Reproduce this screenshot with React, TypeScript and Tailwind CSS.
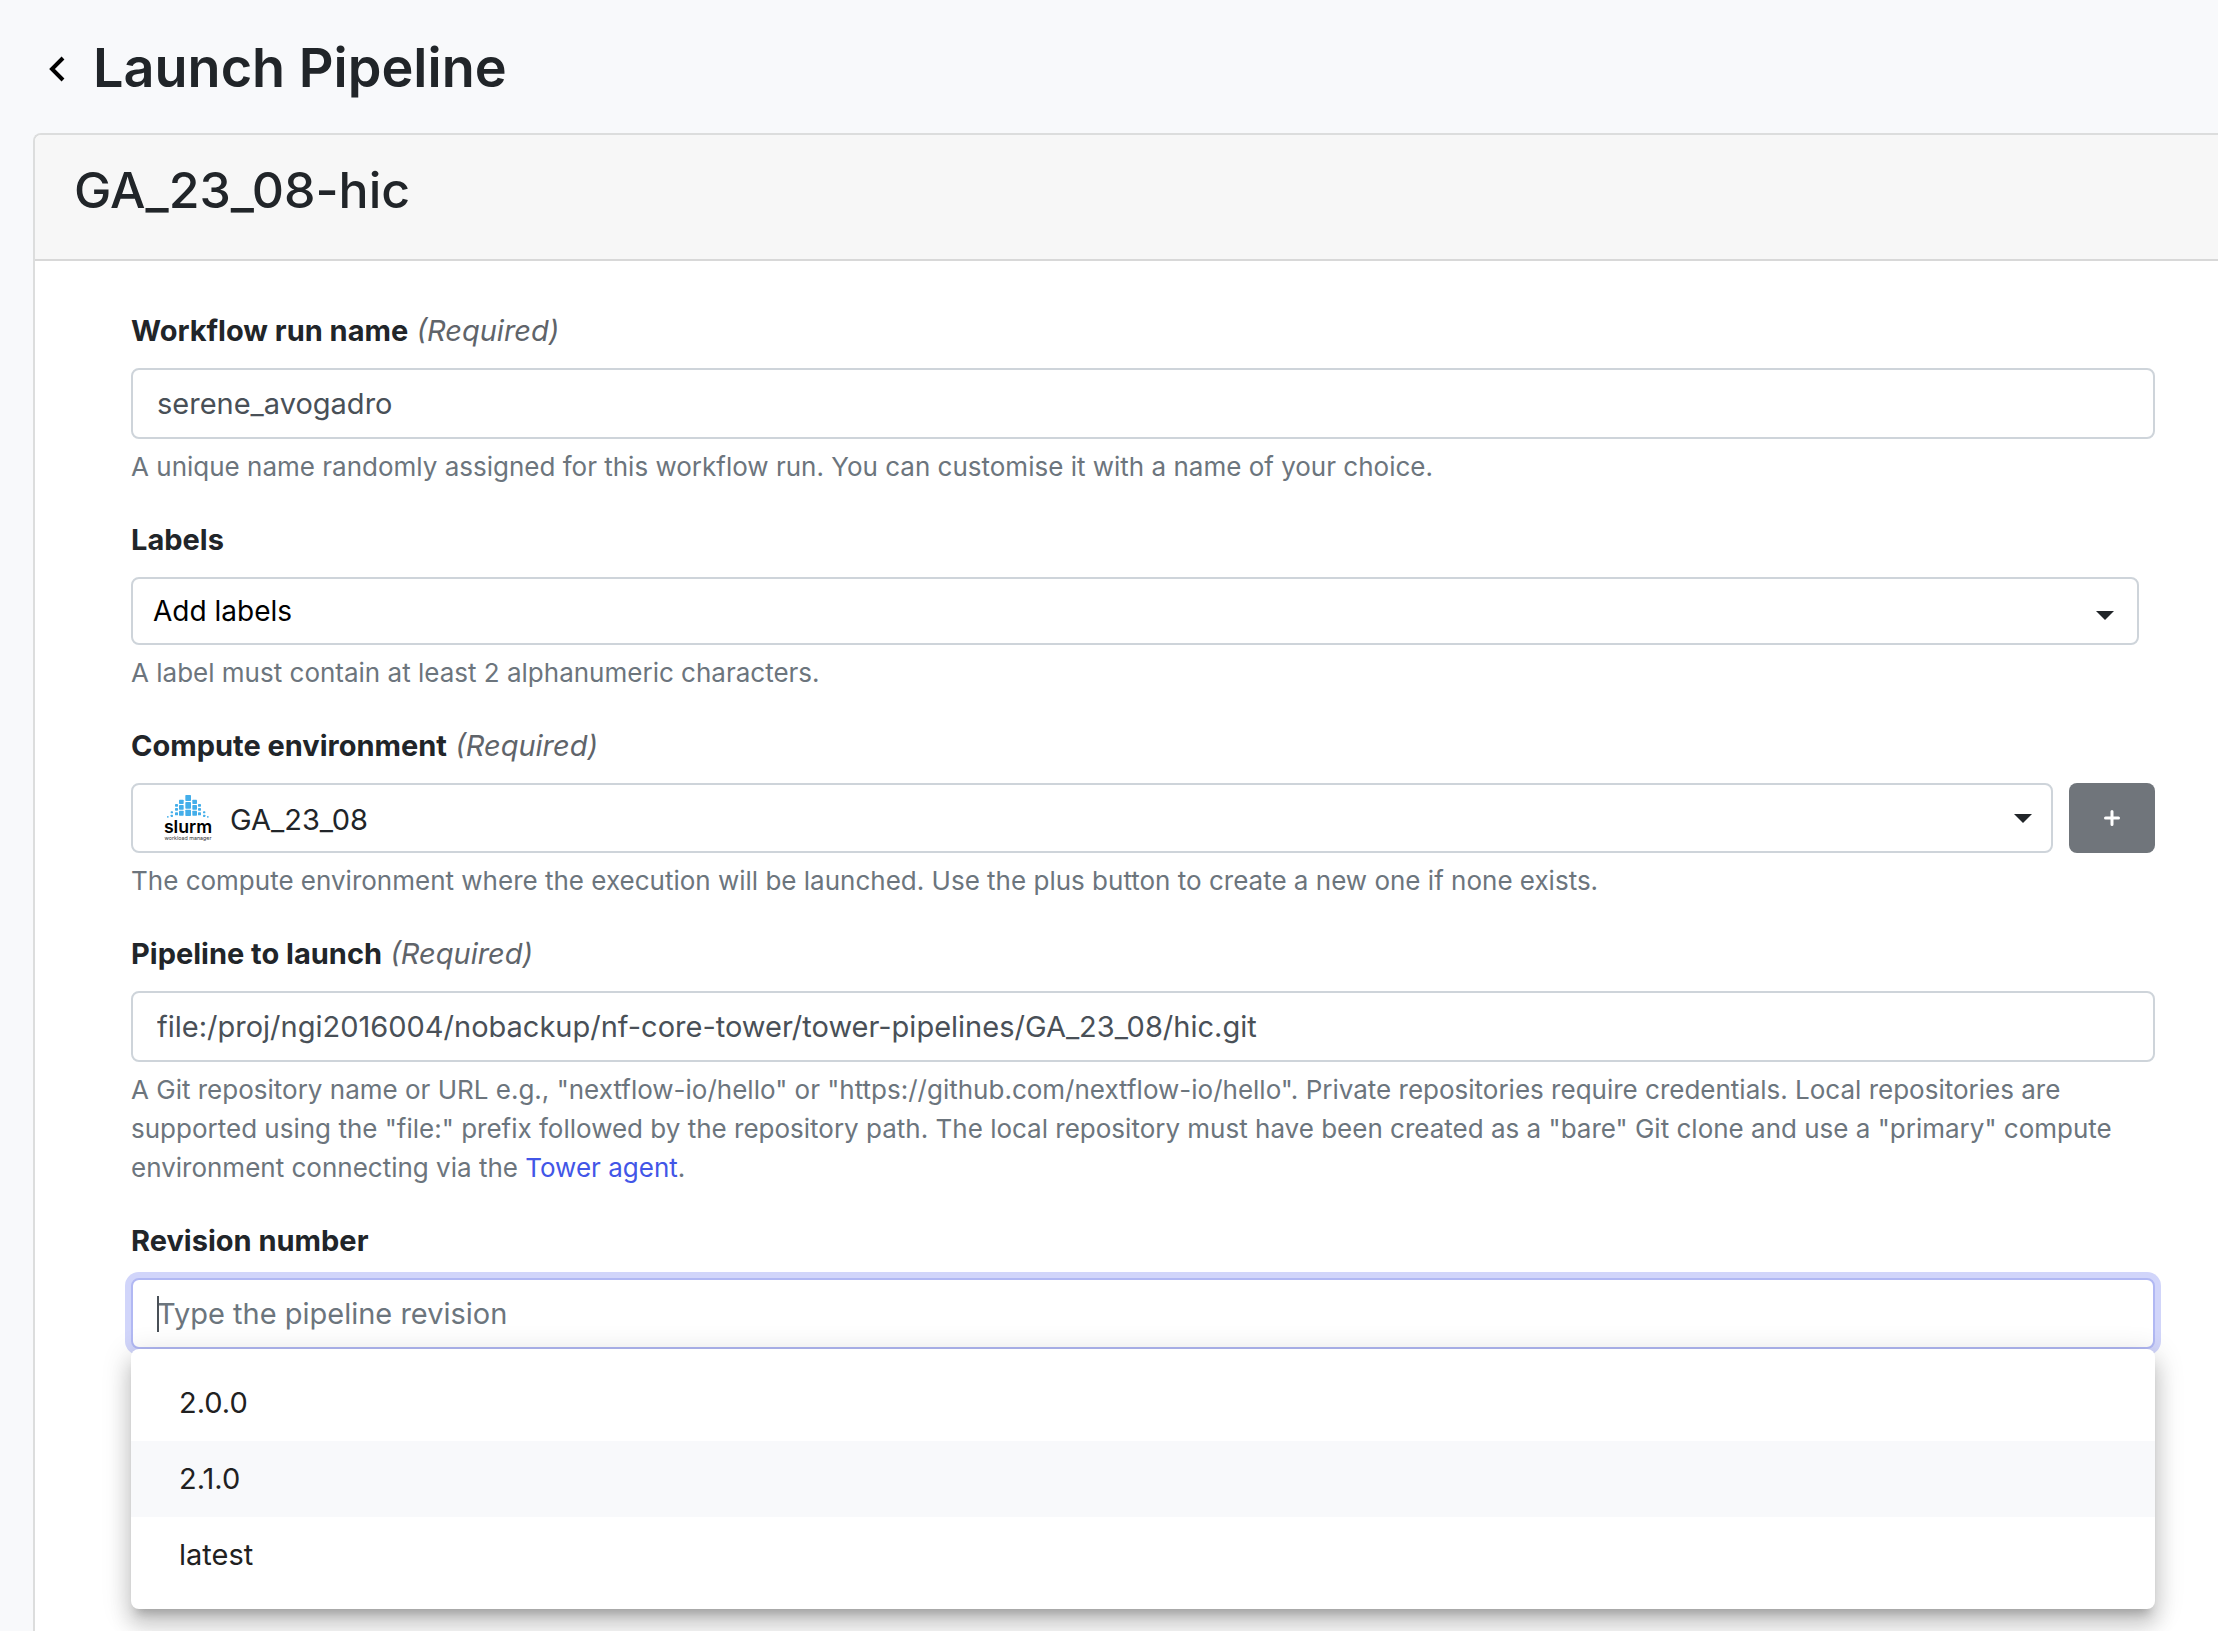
import { useState } from 'react';
import type { ReactNode } from 'react';

interface FieldProps {
  id: string;
  label: string;
  required?: boolean;
  help?: ReactNode;
  children: ReactNode;
}

const Field = ({ id, label, required, help, children }: FieldProps) => (
  <div>
    <label htmlFor={id} className="block mb-4 text-[29px] leading-[42px] font-bold">
      {label}
      {required && <span className="font-normal italic text-[#5f646a]"> (Required)</span>}
    </label>
    {children}
    {help && <p className="mt-2 text-[26px] leading-[39px] text-[#6c757d]">{help}</p>}
  </div>
);

const Caret = () => (
  <svg width="18" height="9" viewBox="0 0 18 9" fill="#212529" aria-hidden="true">
    <path d="M0 0h18L9 9z" />
  </svg>
);

// x, y, width, height of each block in the slurm mark
const slurmBlocks = [
  [106, 45, 17, 18], [106, 66, 17, 20], [106, 89, 17, 19],
  [87, 59, 14, 13], [87, 75, 14, 14], [87, 92, 14, 15],
  [127, 59, 14, 13], [127, 75, 14, 14], [127, 92, 14, 15],
  [75, 72, 9, 8], [75, 84, 9, 8], [75, 97, 9, 9],
  [144, 72, 9, 8], [144, 84, 9, 8], [144, 97, 9, 9],
  [62, 94, 7, 6], [62, 104, 7, 7], [159, 94, 7, 6], [159, 104, 7, 7],
  [51, 108, 5, 5], [171, 108, 5, 5],
];

const SlurmLogo = () => (
  <svg width="48" height="48" viewBox="42 42 144 144" aria-hidden="true">
    {slurmBlocks.map(([x, y, w, h]) => (
      <rect key={`${x}-${y}`} x={x} y={y} width={w} height={h} rx="2" fill="#43aeea" />
    ))}
    <text x="114" y="159" textAnchor="middle" fontSize="53" fontWeight="600" fill="#000">slurm</text>
    <text x="114" y="179" textAnchor="middle" fontSize="16" fill="#333">workload manager</text>
  </svg>
);

const inputClass =
  'block w-full h-[71px] px-6 text-[29px] bg-white border-2 border-[#ced4da] rounded-lg outline-none text-[#495057] placeholder:text-[#6c757d] placeholder:opacity-100';

const revisions = ['2.0.0', '2.1.0', 'latest'];

export default function App() {
  const [runName, setRunName] = useState('serene_avogadro');
  const [pipeline, setPipeline] = useState(
    'file:/proj/ngi2016004/nobackup/nf-core-tower/tower-pipelines/GA_23_08/hic.git'
  );
  const [revision, setRevision] = useState('');
  const [active, setActive] = useState('2.1.0');

  return (
    <div className="min-h-screen flex flex-col pl-[33px] bg-[#f8f9fb] text-[#212529] font-['Inter',sans-serif] overflow-hidden">
      <header className="flex items-center pt-[34px] pb-[31px] pl-3">
        <button type="button" aria-label="Back" className="mr-6">
          <svg width="24" height="28" viewBox="0 0 24 28" fill="none" stroke="#000" strokeWidth="4">
            <path d="M18 4L7 15L18 26" />
          </svg>
        </button>
        <h1 className="text-[54px] leading-[68px] font-semibold">Launch Pipeline</h1>
      </header>

      <main className="flex-1 bg-white border-t-2 border-l-2 border-[#dcdddd] rounded-tl-lg">
        <div className="pt-[25px] pb-[39px] pl-[39px] bg-[#f7f7f7] border-b-2 border-[#d8d8d8] rounded-tl-md">
          <h2 className="text-[50px] leading-[60px] font-medium">GA_23_08-hic</h2>
        </div>

        <form className="flex flex-col gap-[33px] pt-[49px] pb-16 pl-24 pr-[63px]">
          <Field
            id="run-name"
            label="Workflow run name"
            required
            help="A unique name randomly assigned for this workflow run. You can customise it with a name of your choice."
          >
            <input id="run-name" className={inputClass} value={runName} onChange={(e) => setRunName(e.target.value)} />
          </Field>

          <Field id="labels" label="Labels" help="A label must contain at least 2 alphanumeric characters.">
            <div className="relative mr-4">
              <select
                id="labels"
                className="block w-full h-[68px] pl-5 pr-16 appearance-none text-[28px] text-black bg-white border-2 border-[#ced4da] rounded-lg outline-none"
              >
                <option>Add labels</option>
              </select>
              <div className="absolute inset-y-0 right-[25px] flex items-center pt-2 pointer-events-none">
                <Caret />
              </div>
            </div>
          </Field>

          <Field
            id="compute-env"
            label="Compute environment"
            required
            help="The compute environment where the execution will be launched. Use the plus button to create a new one if none exists."
          >
            <div className="flex gap-4">
              <div className="relative flex-1">
                <select
                  id="compute-env"
                  className="block w-full h-[70px] pt-1 pl-[97px] pr-16 appearance-none text-[29px] bg-white border-2 border-[#ced4da] rounded-lg outline-none"
                >
                  <option>GA_23_08</option>
                </select>
                <div className="absolute inset-y-0 left-[33px] flex items-center pointer-events-none">
                  <SlurmLogo />
                </div>
                <div className="absolute inset-y-0 right-[21px] flex items-center pointer-events-none">
                  <Caret />
                </div>
              </div>
              <button
                type="button"
                aria-label="Add compute environment"
                className="flex items-center justify-center w-[86px] h-[70px] rounded-lg bg-[#70757b]"
              >
                <svg width="16" height="16" viewBox="0 0 16 16" stroke="#fff" strokeWidth="3" strokeLinecap="round">
                  <path d="M8 1.500V14.500M1.500 8H14.500" />
                </svg>
              </button>
            </div>
          </Field>

          <Field
            id="pipeline"
            label="Pipeline to launch"
            required
            help={
              <>
                A Git repository name or URL e.g., "nextflow-io/hello" or "https://github.com/nextflow-io/hello". Private
                repositories require credentials. Local repositories are supported using the "file:" prefix followed by
                the repository path. The local repository must have been created as a "bare" Git clone and use a
                "primary" compute environment connecting via the{' '}
                <a href="#tower-agent" className="text-[#4256e7]">Tower agent</a>.
              </>
            }
          >
            <input id="pipeline" className={inputClass} value={pipeline} onChange={(e) => setPipeline(e.target.value)} />
          </Field>

          <Field id="revision" label="Revision number">
            <div className="relative">
              <input
                id="revision"
                placeholder="Type the pipeline revision"
                className="block w-full h-[71px] px-6 text-[29px] bg-white border-2 border-[#b1b8f3] ring-6 ring-[#d1d5fa] rounded-lg outline-none text-[#495057] placeholder:text-[#6c757d] placeholder:opacity-100"
                value={revision}
                onChange={(e) => setRevision(e.target.value)}
              />
              {/* text cursor */}
              {!revision && <span className="absolute left-[26px] top-[18px] w-[2px] h-9 bg-[#495057]" />}
              <ul className="absolute top-full inset-x-0 py-4 bg-white rounded-lg shadow-[0_10px_10px_-6px_rgba(0,0,0,0.2),0_16px_20px_2px_rgba(0,0,0,0.14),0_6px_28px_4px_rgba(0,0,0,0.12)]">
                {revisions.map((r) => (
                  <li key={r}>
                    <button
                      type="button"
                      className={`block w-full h-[76px] pl-12 text-left text-[29px] text-[#212121] ${active === r ? 'bg-[#f8f9fb]' : ''}`}
                      onMouseEnter={() => setActive(r)}
                      onClick={() => setRevision(r)}
                    >
                      {r}
                    </button>
                  </li>
                ))}
              </ul>
            </div>
          </Field>
        </form>
      </main>
    </div>
  );
}
